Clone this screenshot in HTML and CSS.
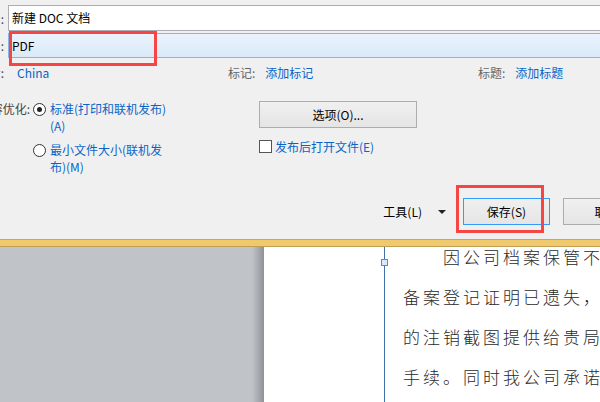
FILE: index.html
```html
<!DOCTYPE html>
<html lang="zh-CN">
<head>
  <meta charset="UTF-8" />
  <title>另存为 PDF</title>
  <link rel="stylesheet" href="styles.css">
</head>
<body>

  <!-- Save-as dialog (left part cut off) -->
  <div class="dialog">
    <div class="dialog-body">
      <div class="row row-name">
        <span class="lbl">文件名(N):</span>
        <div class="input">新建 DOC 文档</div>
      </div>
      <div class="row row-type">
        <span class="lbl">保存类型(T):</span>
        <div class="select">PDF</div>
      </div>
      <div class="row row-meta">
        <div class="meta meta-author">
          <span class="lbl">作者:</span>
          <a class="link">China</a>
        </div>
        <div class="meta meta-tags">
          <span class="mlbl">标记:</span>
          <a class="link">添加标记</a>
        </div>
        <div class="meta">
          <span class="mlbl">标题:</span>
          <a class="link">添加标题</a>
        </div>
      </div>
      <div class="row row-opt">
        <div class="optimize">
          <span class="lbl lbl-opt">内容优化:</span>
          <div class="radios">
            <label class="radio checked"><span class="dot"></span><span class="rtext">标准(打印和联机发布)(A)</span></label>
            <label class="radio"><span class="dot"></span><span class="rtext">最小文件大小(联机发布)(M)</span></label>
          </div>
        </div>
        <div class="opt-side">
          <button class="btn btn-options">选项(O)...</button>
          <label class="check"><span class="box"></span>发布后打开文件(E)</label>
        </div>
      </div>
      <div class="row row-actions">
        <span class="tools">工具(L)</span>
        <span class="caret"></span>
        <button class="btn btn-save">保存(S)</button>
        <button class="btn btn-cancel">取消</button>
      </div>
    </div>
    <!-- red annotation boxes -->
    <span class="mark mark-type"></span>
    <span class="mark mark-save"></span>
  </div>

  <div class="band"></div>

  <!-- Word document behind the dialog -->
  <div class="doc">
    <div class="gutter"></div>
    <div class="page">
      <div class="margin"></div>
      <span class="handle"></span>
      <div class="text">
        <div class="line first">因公司档案保管不善，我公司的</div>
        <div class="line">备案登记证明已遗失，现将网上</div>
        <div class="line">的注销截图提供给贵局，请予办理</div>
        <div class="line">手续。同时我公司承诺所提供材料</div>
      </div>
    </div>
  </div>

</body>
</html>
```

FILE: styles.css
```css
/* Base */
*, *::before, *::after {
  box-sizing: border-box;
}
html, body {
  margin: 0;
  width: 600px;
  height: 402px;
  overflow: hidden;
}
body {
  font-family: "Noto Sans CJK SC", "Noto Sans", sans-serif;
  font-size: 12px;
  color: #000;
  background: #f0f0f0;
}

/* Dialog */
.dialog {
  position: relative;
  height: 239px;
  background: #f0f0f0;
}
.dialog-body {
  margin: 0 -50px 0 -80px;
  padding-top: 5px;
}
.row {
  display: flex;
  align-items: center;
}
.lbl {
  flex: none;
  width: 84px;
  text-align: right;
  color: #444;
  white-space: nowrap;
  line-height: 17px;
}
.link {
  color: #0a64c8;
  white-space: nowrap;
}

.row-name .input {
  flex: 1;
  margin-left: 4px;
  height: 26px;
  border: 1px solid #abadb3;
  background: #fff;
  padding-left: 3px;
  line-height: 24px;
}
.row-type {
  margin-top: 2px;
}
.row-type .select {
  flex: 1;
  margin-left: 4px;
  height: 25px;
  border: 1px solid #86b6e6;
  background: linear-gradient(#ebf4fd, #dae8f8);
  padding-left: 3px;
  line-height: 23px;
}

/* Author / tags / title */
.row-meta {
  margin-top: 6px;
  line-height: 17px;
}
.meta {
  display: flex;
  gap: 10px;
  flex: none;
}
.meta-author {
  width: 308px;
  gap: 13px;
}
.meta-tags {
  width: 250px;
}
.mlbl {
  color: #666;
}

/* Optimize options */
.row-opt {
  margin-top: 19px;
  align-items: flex-start;
}
.optimize {
  display: flex;
  width: 339px;
  flex: none;
}
.lbl-opt {
  width: 110px;
}
.radios {
  display: flex;
  flex-direction: column;
  gap: 7px;
  margin-left: 3px;
}
.radio {
  display: flex;
  align-items: flex-start;
  gap: 4px;
}
.dot {
  flex: none;
  width: 13px;
  height: 13px;
  margin-top: 3px;
  border: 1px solid #333;
  border-radius: 50%;
  background: #fff;
  position: relative;
}
.radio.checked .dot::after {
  content: "";
  position: absolute;
  left: 3px;
  top: 3px;
  width: 5px;
  height: 5px;
  border-radius: 50%;
  background: #222;
}
.rtext {
  width: 120px;
  line-height: 17px;
  color: #0a64c8;
}

.opt-side {
  display: flex;
  flex-direction: column;
  align-items: flex-start;
}
.btn {
  font: inherit;
  color: #000;
  height: 27px;
  border: 1px solid #adadad;
  background: linear-gradient(#f0f0f0, #e5e5e5);
  padding: 0;
  line-height: 25px;
  text-align: center;
}
.btn-options {
  width: 158px;
  margin-top: 1px;
}
.check {
  display: flex;
  align-items: center;
  gap: 3px;
  margin-top: 10px;
  line-height: 17px;
  color: #0a64c8;
}
.box {
  width: 13px;
  height: 13px;
  border: 1px solid #555;
  background: #fff;
}

/* Bottom buttons */
.row-actions {
  margin-top: 23px;
  justify-content: flex-end;
}
.tools {
  line-height: 17px;
}
.caret {
  margin-left: 16px;
  width: 0;
  height: 0;
  border-left: 4px solid transparent;
  border-right: 4px solid transparent;
  border-top: 4px solid #222;
}
.btn-save {
  width: 87px;
  margin-left: 17px;
  border-color: #3399ff;
}
.btn-cancel {
  width: 87px;
  margin-left: 13px;
}

/* Red annotation boxes */
.mark {
  position: absolute;
  border: 3px solid #f54545;
}
.mark-type {
  left: 9px;
  top: 31px;
  width: 148px;
  height: 35px;
}
.mark-save {
  left: 456px;
  top: 185px;
  width: 88px;
  height: 48px;
}

/* Yellow separator */
.band {
  height: 8px;
  background: #f0c96c;
  border-top: 1px solid #caa65e;
  border-bottom: 1px solid #c19e55;
}

/* Document */
.doc {
  display: flex;
  height: 155px;
  overflow: hidden;
}
.gutter {
  flex: none;
  width: 264px;
  background: linear-gradient(to right, #c0c3c7 0, #c0c3c7 252px, #a4a8ad 259px, #8e9297 264px);
}
.page {
  flex: 1;
  display: flex;
  background: #fff;
  position: relative;
}
.margin {
  flex: none;
  width: 121px;
  border-right: 1px solid #3f71aa;
}
.handle {
  position: absolute;
  left: 117px;
  top: 12px;
  width: 7px;
  height: 7px;
  border: 1px solid #5b8ac0;
  background: #dcebfa;
}
.text {
  padding-left: 18px;
  margin-top: -10px;
  font-size: 17px;
  letter-spacing: 3px;
  line-height: 40px;
  color: #2a2a2a;
  font-weight: 300;
}
.line {
  white-space: nowrap;
}
.line.first {
  text-indent: 40px;
}
```
